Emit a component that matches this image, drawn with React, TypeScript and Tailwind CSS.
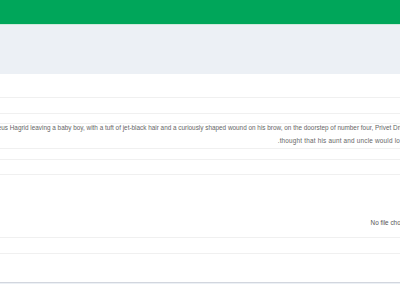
export default function App() {
  const line1 =
    'Rubeus Hagrid leaving a baby boy, with a tuft of jet-black hair and a curiously shaped wound on his brow, on the doorstep of number four, Privet Drive, where he spent his childhood';
  const line2 = '.thought that his aunt and uncle would lo';

  return (
    <div
      className="w-[400px] h-[284px] overflow-hidden bg-[#ecf0f5] text-[#666]"
      style={{ fontFamily: '"Liberation Sans", Arial, sans-serif' }}
    >
      <header className="h-[25px] bg-[#00a65a] border-b border-[#cdeadb]" />
      <div className="h-[49px]" />

      <section className="bg-white border-b border-[#d2d6de]">
        <div className="h-[24px] border-b border-[#f0f0f0]" />
        <div className="h-[16px] border-b border-[#f0f0f0]" />
        <div className="h-[10px] border-b border-[#f0f0f0]" />
        <div className="h-[25px] border-b border-[#f0f0f0] overflow-hidden flex flex-col gap-[5px] text-[6.38px] leading-[8px]">
          <p className="whitespace-nowrap -ml-[14px]">{line1}</p>
          <p className="whitespace-nowrap text-right tracking-[0.2px]">{line2}</p>
        </div>
        <div className="h-[11px] border-b border-[#f0f0f0]" />
        <div className="h-[15px] border-b border-[#f0f0f0]" />
        <div className="h-[63px] border-b border-[#f0f0f0] flex items-end justify-end pb-[9px] overflow-hidden">
          <span className="whitespace-nowrap text-[6.38px] text-[#555] -mr-[11px]">No file chosen</span>
        </div>
        <div className="h-[16px] border-b border-[#f0f0f0]" />
        <div className="h-[28px]" />
      </section>
    </div>
  );
}
